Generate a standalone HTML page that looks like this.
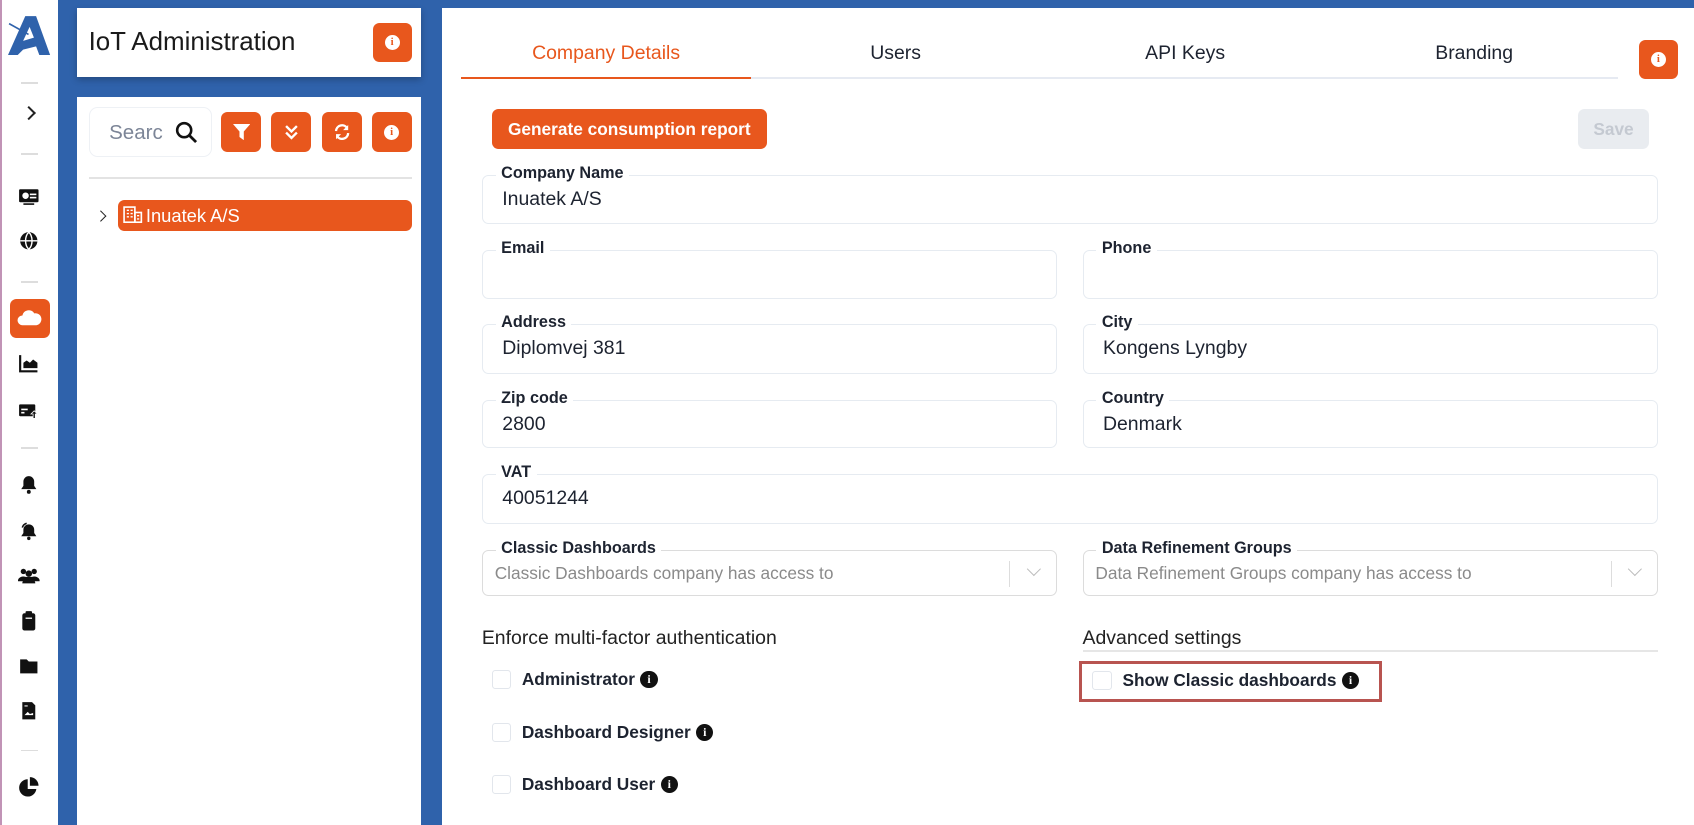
<!DOCTYPE html>
<html><head><meta charset="utf-8">
<style>
*{box-sizing:border-box;margin:0;padding:0}
html,body{width:1694px;height:825px;overflow:hidden;background:#fff}
#w{zoom:1.08036;width:1568px;height:764px;position:relative;font-family:"Liberation Sans",sans-serif;color:#1d2330;overflow:hidden}
.a{position:absolute}
.ob{position:absolute;background:#e8571d;border-radius:6px;display:flex;align-items:center;justify-content:center}
.inf{width:14px;height:14px;border-radius:50%;background:#fff;color:#e8571d;font:bold 10px "Liberation Serif",serif;display:flex;align-items:center;justify-content:center}
.binf{display:flex;width:16px;height:16px;border-radius:50%;background:#111;color:#fff;font:bold 11px "Liberation Serif",serif;align-items:center;justify-content:center;margin-left:5px}
.fld{position:absolute;border:1.5px solid #e6ebf1;border-radius:6px;background:#fff}
.fld .lb{position:absolute;top:-11px;left:12px;background:#fff;padding:0 5px;font-weight:bold;font-size:15px;line-height:18px}
.fld .v{position:absolute;left:18px;top:11px;font-size:18px}
.sel{border-color:#dcdcdc}
.sel .v{left:11px;color:#8a8a8a;font-size:16px;top:11px}
.sel .dv{position:absolute;right:42px;top:9px;width:1px;height:24px;background:#ddd}
.sel .ch{position:absolute;right:16px;top:12px;width:9px;height:9px;border-right:1.5px solid #bbb;border-bottom:1.5px solid #bbb;transform:rotate(45deg)}
.cb{position:absolute;width:18px;height:18px;border:1.5px solid #e2e6ec;border-radius:3px}
.cl{position:absolute;font-weight:bold;font-size:16px;display:flex;align-items:center;height:18px}
.dvd{position:absolute;left:19px;width:16px;height:1.5px;background:#ddd}
.ic{position:absolute;left:17px;width:20px;height:20px}
</style></head><body><div id="w">
<div class="a" style="left:0;top:0;width:2px;height:764px;background:#c193b6"></div>
<div class="a" style="left:54px;top:0;width:1514px;height:764px;background:#2f62ab"></div>
<!-- sidebar -->
<svg class="a" style="left:7px;top:14px" width="40" height="38" viewBox="0 0 40 38"><path d="M16 1h10l13 36h-10l-3-8-12 3-5 5H0z" fill="#2f62ab"/><path d="M14 24l10-3-4-10z" fill="#fff"/><path d="M1 8l18 10" stroke="#2f62ab" stroke-width="1.5"/></svg>
<div class="dvd" style="top:76px"></div>
<div class="a" style="left:22px;top:100px;width:9px;height:9px;border-right:2px solid #222;border-top:2px solid #222;transform:rotate(45deg)"></div>
<div class="dvd" style="top:142px"></div>
<svg class="ic" style="top:172px" viewBox="0 0 20 20"><rect x="1" y="3" width="18" height="12" rx="1" fill="#111"/><circle cx="7" cy="9" r="3" fill="#fff"/><rect x="11" y="7" width="6" height="1.5" fill="#fff"/><rect x="11" y="10" width="6" height="1.5" fill="#fff"/><rect x="5" y="16" width="10" height="1.5" fill="#111"/></svg>
<svg class="ic" style="top:213px" viewBox="0 0 20 20"><circle cx="10" cy="10" r="8" fill="#111"/><path d="M2 10h16M10 2c-4 4-4 12 0 16M10 2c4 4 4 12 0 16" stroke="#fff" stroke-width="1.3" fill="none"/></svg>
<div class="dvd" style="top:260px"></div>
<div class="a" style="left:9px;top:277px;width:37px;height:36px;background:#e8571d;border-radius:6px"></div>
<svg class="a" style="left:16px;top:286px" width="23" height="16" viewBox="0 0 23 16"><path d="M5 15a4.5 4.5 0 0 1 0-9 6 6 0 0 1 11-2 5 5 0 0 1 2 11z" fill="#fff"/></svg>
<svg class="ic" style="top:327px" viewBox="0 0 20 20"><path d="M2 2v15h16" stroke="#111" stroke-width="2" fill="none"/><path d="M5 14v-5l3-2 3 2 3-3 4 3v5z" fill="#111"/></svg>
<svg class="ic" style="top:370px" viewBox="0 0 20 20"><rect x="1" y="4" width="15" height="11" rx="1" fill="#111"/><rect x="3" y="8" width="6" height="1.5" fill="#fff"/><rect x="3" y="11" width="3" height="1.5" fill="#fff"/><path d="M15 10l3 3h-2v4h-2v-4h-2z" fill="#111" stroke="#fff" stroke-width=".7"/></svg>
<div class="dvd" style="top:414px"></div>
<svg class="ic" style="top:439px" viewBox="0 0 20 20"><path d="M10 2a5 5 0 0 1 5 5v4l2 3H3l2-3V7a5 5 0 0 1 5-5z" fill="#111"/><circle cx="10" cy="16.5" r="1.8" fill="#111"/></svg>
<svg class="ic" style="top:481px" viewBox="0 0 20 20"><path d="M10 4a5 5 0 0 1 5 5v3l2 3H3l2-3V9a5 5 0 0 1 5-5z" fill="#111"/><circle cx="10" cy="17" r="1.6" fill="#111"/><path d="M4 7a6 6 0 0 1 4-4" stroke="#111" stroke-width="1.5" fill="none"/></svg>
<svg class="ic" style="top:523px" viewBox="0 0 20 20"><circle cx="5" cy="6" r="2.5" fill="#111"/><circle cx="15" cy="6" r="2.5" fill="#111"/><circle cx="10" cy="8" r="3" fill="#111"/><path d="M0 14a5 4 0 0 1 7-3h6a5 4 0 0 1 7 3v1H0z" fill="#111"/><path d="M4 17a6 5 0 0 1 12 0z" fill="#111"/></svg>
<svg class="ic" style="top:565px" viewBox="0 0 20 20"><rect x="4" y="3" width="12" height="16" rx="2" fill="#111"/><rect x="7" y="1" width="6" height="4" rx="1" fill="#111"/><rect x="7" y="7" width="6" height="1.2" fill="#fff"/></svg>
<svg class="ic" style="top:606px" viewBox="0 0 20 20"><path d="M2 4h6l2 2h8v11H2z" fill="#111"/></svg>
<svg class="ic" style="top:648px" viewBox="0 0 20 20"><path d="M4 2h9l3 3v13H4z" fill="#111"/><path d="M6 14l3-3 2 2 3-1v2H6z" fill="#fff"/><rect x="6" y="5" width="3" height="1" fill="#fff"/></svg>
<div class="dvd" style="top:694px"></div>
<svg class="ic" style="top:718px" viewBox="0 0 20 20"><path d="M9 3a8 8 0 1 0 8 9H9z" fill="#111"/><path d="M11 1a8 8 0 0 1 8 8h-8z" fill="#111"/></svg>
<!-- left panel -->
<div class="a" style="left:71px;top:7px;width:319px;height:64px;background:#fff;box-shadow:0 3px 6px rgba(0,0,0,.25)"></div>
<div class="a" style="left:82px;top:26px;font-size:24px;color:#1a1a1a">IoT Administration</div>
<div class="ob" style="left:345px;top:21px;width:36px;height:36px"><div class="inf">i</div></div>
<div class="a" style="left:71px;top:90px;width:319px;height:674px;background:#fff"></div>
<div class="a" style="left:82px;top:99px;width:114px;height:46px;border:1.5px solid #eef1f5;border-radius:8px"></div>
<div class="a" style="left:101px;top:112px;font-size:19px;color:#7c8597">Searc</div>
<svg class="a" style="left:162px;top:112px" width="21" height="21" viewBox="0 0 21 21"><circle cx="8.5" cy="8.5" r="6.5" stroke="#111" stroke-width="2.4" fill="none"/><path d="M13.5 13.5l6 6" stroke="#111" stroke-width="2.6"/></svg>
<div class="ob" style="left:205px;top:104px;width:37px;height:37px"><svg width="16" height="15" viewBox="0 0 16 15"><path d="M0 0h16l-6 7v8l-4-3V7z" fill="#fff"/></svg></div>
<div class="ob" style="left:251px;top:104px;width:37px;height:37px"><svg width="12" height="14" viewBox="0 0 12 14"><path d="M1 1l5 5 5-5M1 7l5 5 5-5" stroke="#fff" stroke-width="2.2" fill="none"/></svg></div>
<div class="ob" style="left:298px;top:104px;width:37px;height:37px"><svg width="15" height="15" viewBox="0 0 16 16"><path d="M2 7a6 6 0 0 1 11-3M14 9a6 6 0 0 1-11 3" stroke="#fff" stroke-width="2.3" fill="none"/><path d="M14 1v5h-5zM2 15v-5h5z" fill="#fff"/></svg></div>
<div class="ob" style="left:344px;top:104px;width:37px;height:37px"><div class="inf">i</div></div>
<div class="a" style="left:82px;top:164px;width:299px;height:1.5px;background:#e3e3e3"></div>
<div class="a" style="left:90px;top:196px;width:7px;height:7px;border-right:1.6px solid #222;border-top:1.6px solid #222;transform:rotate(45deg)"></div>
<div class="a" style="left:109px;top:185px;width:272px;height:29px;background:#e8571d;border-radius:6px"></div>
<svg class="a" style="left:114px;top:191px" width="18" height="16" viewBox="0 0 18 16"><rect x="1" y="1" width="10" height="14" fill="none" stroke="#fff" stroke-width="1.5"/><rect x="11" y="6" width="6" height="9" fill="none" stroke="#fff" stroke-width="1.5"/><path d="M3.5 4h2M7 4h2M3.5 7h2M7 7h2M3.5 10h2M7 10h2M13 9h2M13 12h2" stroke="#fff" stroke-width="1.3"/></svg>
<div class="a" style="left:135px;top:190px;font-size:17px;color:#fff">Inuatek A/S</div>
<!-- main -->
<div class="a" style="left:409px;top:7px;width:1159px;height:757px;background:#fff"></div>
<div class="a" style="left:427px;top:71px;width:1071px;height:2px;background:#e6eaf2"></div>
<div class="a" style="left:427px;top:71px;width:268px;height:2px;background:#e8571d"></div>
<div class="a" style="left:427px;top:39px;width:268px;text-align:center;font-size:18px;color:#e8571d">Company Details</div>
<div class="a" style="left:695px;top:39px;width:268px;text-align:center;font-size:18px">Users</div>
<div class="a" style="left:963px;top:39px;width:268px;text-align:center;font-size:18px">API Keys</div>
<div class="a" style="left:1231px;top:39px;width:267px;text-align:center;font-size:18px">Branding</div>
<div class="ob" style="left:1517px;top:37px;width:36px;height:36px"><div class="inf">i</div></div>
<div class="ob" style="left:455px;top:101px;width:255px;height:37px;color:#fff;font-weight:bold;font-size:16px">Generate consumption report</div>
<div class="a" style="left:1461px;top:101px;width:65px;height:37px;background:#e9ecf0;border-radius:6px;color:#c4c9d1;font-weight:bold;font-size:16px;display:flex;align-items:center;justify-content:center">Save</div>

<div class="fld" style="left:446px;top:162px;width:1089px;height:45px"><span class="lb">Company Name</span><span class="v">Inuatek A/S</span></div>
<div class="fld" style="left:446px;top:231px;width:532px;height:46px"><span class="lb">Email</span></div>
<div class="fld" style="left:1002px;top:231px;width:533px;height:46px"><span class="lb">Phone</span></div>
<div class="fld" style="left:446px;top:300px;width:532px;height:46px"><span class="lb">Address</span><span class="v">Diplomvej 381</span></div>
<div class="fld" style="left:1002px;top:300px;width:533px;height:46px"><span class="lb">City</span><span class="v">Kongens Lyngby</span></div>
<div class="fld" style="left:446px;top:370px;width:532px;height:45px"><span class="lb">Zip code</span><span class="v">2800</span></div>
<div class="fld" style="left:1002px;top:370px;width:533px;height:45px"><span class="lb">Country</span><span class="v">Denmark</span></div>
<div class="fld" style="left:446px;top:439px;width:1089px;height:46px"><span class="lb">VAT</span><span class="v">40051244</span></div>
<div class="fld sel" style="left:446px;top:509px;width:532px;height:43px"><span class="lb">Classic Dashboards</span><span class="v">Classic Dashboards company has access to</span><span class="dv"></span><span class="ch"></span></div>
<div class="fld sel" style="left:1002px;top:509px;width:533px;height:43px"><span class="lb">Data Refinement Groups</span><span class="v">Data Refinement Groups company has access to</span><span class="dv"></span><span class="ch"></span></div>

<div class="a" style="left:446px;top:580px;font-size:18px;color:#222">Enforce multi-factor authentication</div>
<div class="cb" style="left:455px;top:620px"></div><div class="cl" style="left:483px;top:620px">Administrator<span class="binf">i</span></div>
<div class="cb" style="left:455px;top:669px"></div><div class="cl" style="left:483px;top:669px">Dashboard Designer<span class="binf">i</span></div>
<div class="cb" style="left:455px;top:717px"></div><div class="cl" style="left:483px;top:717px">Dashboard User<span class="binf">i</span></div>

<div class="a" style="left:1002px;top:580px;font-size:18px;color:#222">Advanced settings</div>
<div class="a" style="left:1002px;top:602px;width:533px;height:1.5px;background:#e6e6e6"></div>
<div class="a" style="left:999px;top:612px;width:280px;height:38px;border:3px solid #b85450"></div>
<div class="cb" style="left:1011px;top:621px"></div><div class="cl" style="left:1039px;top:621px">Show Classic dashboards<span class="binf">i</span></div>
</div></body></html>
